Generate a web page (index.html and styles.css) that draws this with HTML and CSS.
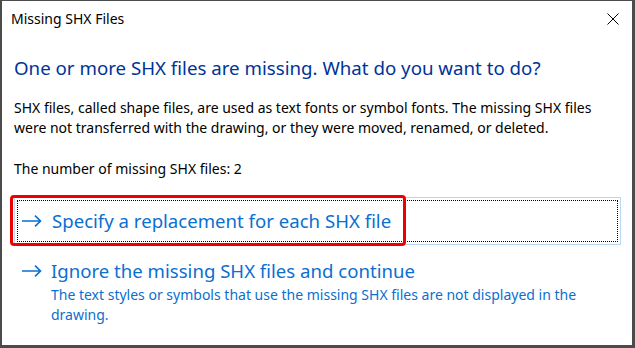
FILE: index.html
```html
<!DOCTYPE html>
<html lang="en">
<head>
  <meta charset="UTF-8">
  <title>Missing SHX Files</title>
  <link rel="stylesheet" href="styles.css">
</head>
<body>
  <div class="dialog">
    <!-- Title bar -->
    <div class="titlebar">
      <span class="title">Missing SHX Files</span>
      <span class="close">
        <svg width="12" height="12" viewBox="0 0 12 12"><path d="M0.5 0.5 L11.5 11.5 M11.5 0.5 L0.5 11.5" stroke="#000" stroke-width="1" fill="none"/></svg>
      </span>
    </div>

    <div class="content">
      <h1 class="instruction">One or more SHX files are missing. What do you want to do?</h1>
      <p class="text">SHX files, called shape files, are used as text fonts or symbol fonts. The missing SHX files were not transferred with the drawing, or they were moved, renamed, or deleted.</p>
      <p class="text count">The number of missing SHX files: 2</p>

      <!-- Command links -->
      <div class="cmd-link focused">
        <div class="focus-rect">
          <span class="arrow">
            <svg width="20" height="12" viewBox="0 0 20 12"><path d="M0 6 H18.5 M13 0.7 L18.5 6 L13 11.3" stroke="currentColor" stroke-width="1.6" fill="none"/></svg>
          </span>
          <div class="cmd-body">
            <div class="cmd-title">Specify a replacement for each SHX file</div>
          </div>
        </div>
        <div class="highlight"></div>
      </div>

      <div class="cmd-link">
        <div class="focus-rect plain">
          <span class="arrow">
            <svg width="20" height="12" viewBox="0 0 20 12"><path d="M0 6 H18.5 M13 0.7 L18.5 6 L13 11.3" stroke="currentColor" stroke-width="1.6" fill="none"/></svg>
          </span>
          <div class="cmd-body">
            <div class="cmd-title">Ignore the missing SHX files and continue</div>
            <div class="cmd-note">The text styles or symbols that use the missing SHX files are not displayed in the drawing.</div>
          </div>
        </div>
      </div>
    </div>
  </div>
</body>
</html>
```

FILE: styles.css
```css
:root {
  --frame: #4b4b4b;
  --heading: #003399;
  --link: #0a6fd0;
  --text: #000000;
  --light-border: #b9d7ee;
  --mark: #ee0000;
}

* {
  margin: 0;
  padding: 0;
  box-sizing: border-box;
  font-family: 'Noto Sans', sans-serif;
}

body {
  background: var(--frame);
  width: 635px;
  height: 348px;
  overflow: hidden;
}

.dialog {
  background: #fff;
  height: 348px;
  border-style: solid;
  border-color: var(--frame);
  border-width: 1px 3px 3px 2px;
}

/* Title bar */
.titlebar {
  height: 35px;
  display: flex;
  align-items: center;
  justify-content: space-between;
  padding: 0 13px 0 9px;
}

.title {
  font-size: 14px;
  color: var(--text);
}

.close {
  display: flex;
}

/* Main content */
.content {
  padding: 0 12px;
}

.instruction {
  font-size: 18.7px;
  font-weight: 400;
  color: var(--heading);
  line-height: 24px;
  margin-top: 20px;
  white-space: nowrap;
}

.text {
  font-size: 14px;
  line-height: 20px;
  color: var(--text);
  margin-top: 18px;
}

.count {
  margin-top: 21px;
}

/* Command links */
.cmd-link {
  position: relative;
  margin-top: 18px;
  width: 607px;
  border: 1px solid transparent;
  padding: 2px;
}

.cmd-link.focused {
  border-color: var(--light-border);
}

.cmd-link + .cmd-link {
  margin-top: 10px;
}

.focus-rect {
  display: flex;
  align-items: flex-start;
  border: 1px dotted #000;
  padding: 8px 0 8px 4px;
  min-height: 42px;
}

.focus-rect.plain {
  border-color: transparent;
  padding-top: 0;
}

.arrow {
  display: flex;
  align-items: center;
  height: 24px;
  width: 30px;
  color: var(--link);
}

.cmd-title {
  font-size: 18.6px;
  line-height: 24px;
  color: var(--link);
}

.cmd-note {
  font-size: 14px;
  line-height: 20px;
  color: var(--link);
  margin-top: 2px;
}

/* Red annotation around the first link */
.highlight {
  position: absolute;
  left: -5px;
  top: -3px;
  width: 396px;
  height: 51px;
  border: 3px solid var(--mark);
  border-radius: 4px;
}
```
